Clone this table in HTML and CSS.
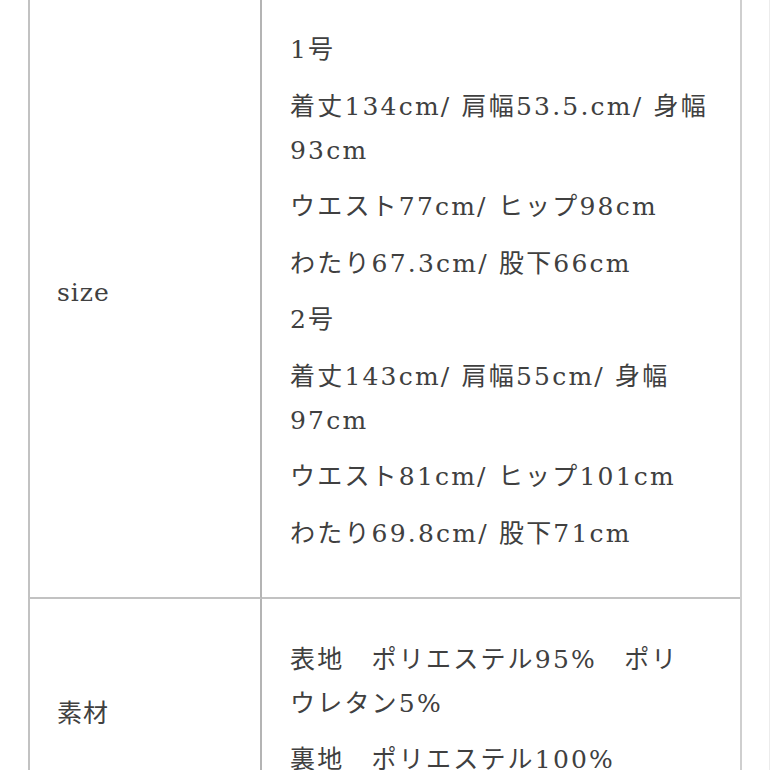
FILE: index.html
```html
<!DOCTYPE html>
<html lang="ja">
<head>
<meta charset="utf-8">
<link rel="stylesheet" href="styles.css">
</head>
<body>
<div class="page">
  <div class="spec">
    <div class="label">size</div>
    <div class="value">
      <p>1号</p>
      <p>着丈134cm/ 肩幅53.5.cm/ 身幅93cm</p>
      <p>ウエスト77cm/ ヒップ98cm</p>
      <p>わたり67.3cm/ 股下66cm</p>
      <p>2号</p>
      <p>着丈143cm/ 肩幅55cm/ 身幅97cm</p>
      <p>ウエスト81cm/ ヒップ101cm</p>
      <p>わたり69.8cm/ 股下71cm</p>
    </div>
    <div class="label">素材</div>
    <div class="value second">
      <p>表地　ポリエステル95%　ポリ<br>ウレタン5%</p>
      <p>裏地　ポリエステル100%</p>
    </div>
  </div>
</div>
</body>
</html>
```
FILE: styles.css
```css
html, body {
  margin: 0;
  padding: 0;
  background: #ffffff;
}
.page {
  width: 769px;
  height: 770px;
  overflow: hidden;
  border-right: 1px solid #ececec;
}
.spec {
  margin: -12px 0 0 28px;
  width: 714px;
  box-sizing: border-box;
  display: grid;
  grid-template-columns: 232px 478px;
  border-left: 2px solid #c2c2c2;
  border-right: 2px solid #cfcfcf;
  font-family: "DejaVu Serif", "Noto Sans CJK JP", serif;
  font-size: 25px;
  letter-spacing: 2.2px;
  color: #404040;
}
.label {
  display: flex;
  align-items: center;
  padding-left: 27px;
  border-right: 2px solid #b4b4b4;
  border-bottom: 2px solid #c2c2c2;
  letter-spacing: 1px;
}
.value {
  display: flex;
  flex-direction: column;
  gap: 12.5px;
  padding: 40px 20px 41px 28px;
  border-bottom: 2px solid #c2c2c2;
}
.value.second {
  padding-top: 39px;
}
.value p {
  margin: 0;
  line-height: 44px;
}
```
